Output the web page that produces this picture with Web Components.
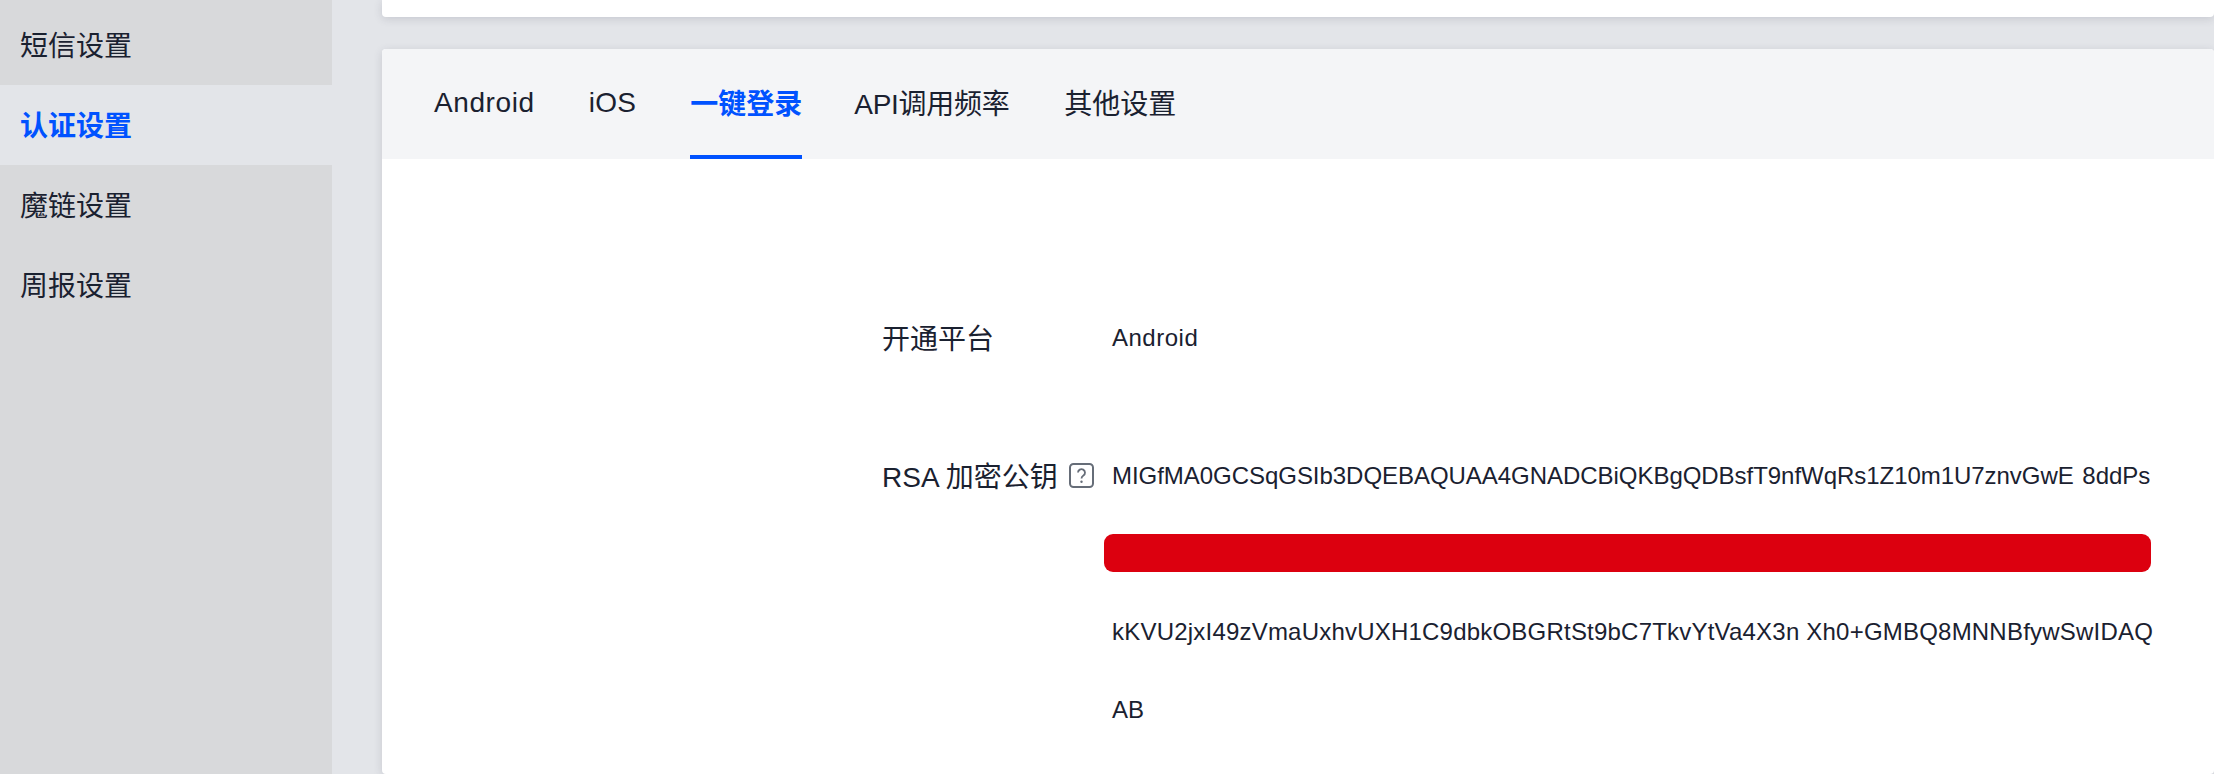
<!DOCTYPE html>
<html>
<head>
<meta charset="utf-8">
<style>
  html, body { margin: 0; height: 100%; overflow: hidden; background: #e3e5e9; }
  body { font-family: "Liberation Sans", "Noto Sans CJK SC", sans-serif; color: #1a2130; }
  app-shell { height: 774px; }
</style>
</head>
<body>
<app-shell>
  <side-menu slot="side">
    <menu-item>短信设置</menu-item>
    <menu-item active>认证设置</menu-item>
    <menu-item>魔链设置</menu-item>
    <menu-item>周报设置</menu-item>
  </side-menu>
  <page-card stub></page-card>
  <page-card>
    <tab-bar slot="head">
      <tab-item style="letter-spacing: .6px; padding-top: 2px">Android</tab-item>
      <tab-item style="letter-spacing: .3px; padding-top: 2px">iOS</tab-item>
      <tab-item active>一键登录</tab-item>
      <tab-item style="letter-spacing: -.3px; margin-left: -2px">API调用频率</tab-item>
      <tab-item style="margin-left: 1px">其他设置</tab-item>
    </tab-bar>
    <form-row>
      <span slot="label">开通平台</span>
      <value-line style="letter-spacing: .5px">Android</value-line>
    </form-row>
    <form-row>
      <span slot="label">RSA 加密公钥</span>
      <help-icon slot="label"></help-icon>
      <value-line style="letter-spacing: -.04px; word-spacing: 2px">MIGfMA0GCSqGSIb3DQEBAQUAA4GNADCBiQKBgQDBsfT9nfWqRs1Z10m1U7znvGwE 8ddPs</value-line>
      <value-line redacted></value-line>
      <value-line style="letter-spacing: .21px">kKVU2jxI49zVmaUxhvUXH1C9dbkOBGRtSt9bC7TkvYtVa4X3n Xh0+GMBQ8MNNBfywSwIDAQ</value-line>
      <value-line>AB</value-line>
    </form-row>
  </page-card>
</app-shell>

<script>
class AppShell extends HTMLElement {
  constructor() {
    super();
    this.attachShadow({ mode: 'open' });
    this.shadowRoot.innerHTML = `
      <style>
        :host { display: flex; overflow: hidden; }
        .side { width: 332px; flex: none; }
        .main { flex: 1; min-width: 0; padding-left: 50px; display: flex; flex-direction: column; gap: 32px; }
      </style>
      <div class="side"><slot name="side"></slot></div>
      <div class="main"><slot></slot></div>
    `;
  }
}

class SideMenu extends HTMLElement {
  constructor() {
    super();
    this.attachShadow({ mode: 'open' });
    this.shadowRoot.innerHTML = `
      <style>
        :host { display: block; height: 774px; padding-top: 5px; box-sizing: border-box; background: #d8d9db; }
      </style>
      <slot></slot>
    `;
  }
}

class MenuItem extends HTMLElement {
  constructor() {
    super();
    this.attachShadow({ mode: 'open' });
    this.shadowRoot.innerHTML = `
      <style>
        :host { display: flex; align-items: center; box-sizing: border-box; height: 80px; padding: 0 0 2px 20px; font-size: 28px; }
        :host([active]) { background: #e3e5e9; color: #0052ff; font-weight: 700; }
      </style>
      <slot></slot>
    `;
  }
}

class PageCard extends HTMLElement {
  constructor() {
    super();
    this.attachShadow({ mode: 'open' });
    this.shadowRoot.innerHTML = `
      <style>
        :host { display: block; background: #fff; border-radius: 4px; box-shadow: 0 2px 8px rgba(54, 58, 80, 0.16); flex: 1; overflow: hidden; }
        :host([stub]) { flex: none; height: 17px; border-radius: 0 0 4px 4px; }
        .body { padding-top: 140px; display: flex; flex-direction: column; gap: 60px; }
        :host([stub]) .body { display: none; }
      </style>
      <slot name="head"></slot>
      <div class="body"><slot></slot></div>
    `;
  }
}

class TabBar extends HTMLElement {
  constructor() {
    super();
    this.attachShadow({ mode: 'open' });
    this.shadowRoot.innerHTML = `
      <style>
        :host { display: flex; gap: 54px; height: 110px; padding-left: 52px; background: #f4f5f7; }
      </style>
      <slot></slot>
    `;
  }
}

class TabItem extends HTMLElement {
  constructor() {
    super();
    this.attachShadow({ mode: 'open' });
    this.shadowRoot.innerHTML = `
      <style>
        :host { display: flex; align-items: center; box-sizing: border-box; height: 110px; font-size: 28px; border-bottom: 4px solid transparent; }
        :host([active]) { color: #0052ff; font-weight: 700; border-bottom-color: #0052ff; }
      </style>
      <slot></slot>
    `;
  }
}

class FormRow extends HTMLElement {
  constructor() {
    super();
    this.attachShadow({ mode: 'open' });
    this.shadowRoot.innerHTML = `
      <style>
        :host { display: grid; grid-template-columns: 230px 1fr; padding-left: 500px; }
        .label { display: flex; align-items: center; gap: 11px; height: 76px; font-size: 28px; white-space: nowrap; }
      </style>
      <div class="label"><slot name="label"></slot></div>
      <div><slot></slot></div>
    `;
  }
}

class ValueLine extends HTMLElement {
  constructor() {
    super();
    this.attachShadow({ mode: 'open' });
    this.shadowRoot.innerHTML = `
      <style>
        :host { display: flow-root; height: 78px; line-height: 78px; font-size: 24px; white-space: nowrap; }
        .bar { display: none; }
        :host([redacted]) .bar { display: block; height: 38px; width: 1047px; margin: 19px 0 0 -8px; background: #dc000f; border-radius: 9px; }
      </style>
      <div class="bar"></div>
      <slot></slot>
    `;
  }
}

class HelpIcon extends HTMLElement {
  constructor() {
    super();
    this.attachShadow({ mode: 'open' });
    this.shadowRoot.innerHTML = `
      <style>
        :host { display: block; width: 25px; height: 25px; flex: none; }
        svg { display: block; }
      </style>
      <svg width="25" height="25" viewBox="0 0 25 25" fill="none">
        <rect x="1" y="1" width="23" height="23" rx="3.5" stroke="#666d78" stroke-width="2"/>
        <path d="M9 9.6a3.5 3.5 0 1 1 5.4 3c-1.2.8-1.9 1.4-1.9 2.9" stroke="#666d78" stroke-width="1.8"/>
        <circle cx="12.5" cy="18.8" r="1.2" fill="#666d78"/>
      </svg>
    `;
  }
}

customElements.define('app-shell', AppShell);
customElements.define('side-menu', SideMenu);
customElements.define('menu-item', MenuItem);
customElements.define('page-card', PageCard);
customElements.define('tab-bar', TabBar);
customElements.define('tab-item', TabItem);
customElements.define('form-row', FormRow);
customElements.define('value-line', ValueLine);
customElements.define('help-icon', HelpIcon);
</script>
</body>
</html>
